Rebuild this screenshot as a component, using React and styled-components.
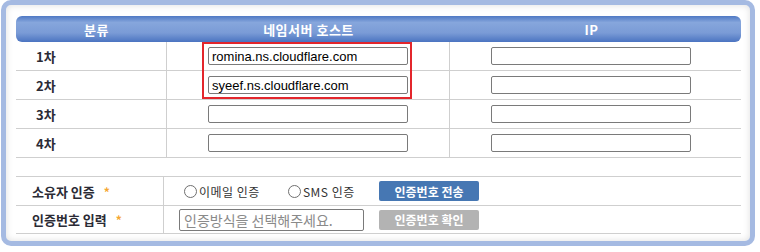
import React from "react";
import styled, { createGlobalStyle } from "styled-components";

const GlobalStyle = createGlobalStyle`
    body {
        margin: 0;
        background: #fff;
        font-family: "Noto Sans CJK KR", "Noto Sans", sans-serif;
    }
`;

const Frame = styled.div`
    box-sizing: border-box;
    margin-left: 1px;
    width: 754px;
    height: 246px;
    border: 5px solid #a5bae2;
    border-radius: 10px;
    background: #fff;
    box-shadow: inset 0 0 7px rgba(0, 0, 0, 0.13);
    padding: 11px 9px 0 10px;
`;

const Header = styled.div`
    display: grid;
    grid-template-columns: 151px 283px 1fr;
    height: 26px;
    border-radius: 6px;
    background: linear-gradient(#4f79c4, #86a6dc 25%, #7a9bd6 65%, #4b74c1);
    color: #fff;
    font-size: 13px;
    font-weight: 700;
`;

const HeadCell = styled.div`
    display: flex;
    align-items: center;
    justify-content: center;
    padding-left: ${(p) => p.$shift || 0}px;
    padding-right: ${(p) => p.$back || 0}px;
    letter-spacing: 0.5px;
`;

const Body = styled.div`
    position: relative;
`;

const Row = styled.div`
    box-sizing: border-box;
    display: grid;
    grid-template-columns: ${(p) => p.$cols};
    height: ${(p) => p.$h}px;
    border-bottom: 1px solid #cfcfcf;
`;

const Cell = styled.div`
    display: flex;
    align-items: center;
    padding-left: ${(p) => p.$pad || 0}px;
    border-right: ${(p) => (p.$line ? "1px solid #cfcfcf" : "none")};
    font-size: 13px;
    color: #333;
`;

const Label = styled.span`
    font-weight: 700;
    color: #2b2b35;
    font-size: 13px;
`;

const Star = styled.span`
    color: #f5a733;
    font-weight: 700;
    font-size: 12px;
    margin-left: 9px;
`;

const HostInput = styled.input`
    box-sizing: border-box;
    width: 200px;
    height: 18px;
    border: 1px solid #7a7a7a;
    border-radius: 2px;
    padding: 0 3px;
    font-family: "Liberation Sans", Arial, sans-serif;
    font-size: 13px;
    color: #000;
    outline: none;
`;

const CodeInput = styled.input`
    box-sizing: border-box;
    width: 185px;
    height: 22px;
    border: 1px solid #7a7a7a;
    border-radius: 2px;
    padding: 0 4px;
    font-family: "Noto Sans CJK KR", sans-serif;
    font-size: 14px;
    outline: none;

    &::placeholder {
        color: #8a8a8a;
    }
`;

const Highlight = styled.div`
    position: absolute;
    left: 186px;
    top: 0;
    width: 210px;
    height: 57px;
    box-sizing: border-box;
    border: 2px solid #e3262c;
    pointer-events: none;
`;

const RadioGroup = styled.div`
    display: flex;
    align-items: center;
    gap: 28px;
    width: 180px;
    padding-left: 5px;
`;

const Radio = styled.label`
    display: flex;
    align-items: center;
    font-size: 12px;
    letter-spacing: 0.5px;
    color: #333;
    white-space: nowrap;

    &::before {
        content: "";
        box-sizing: border-box;
        width: 13px;
        height: 13px;
        border: 1px solid #6f6f6f;
        border-radius: 50%;
        background: #fff;
        margin-right: 2px;
    }
`;

const Button = styled.button`
    width: 100px;
    height: 20px;
    border: none;
    border-radius: 2px;
    background: ${(p) => p.$bg};
    color: #fff;
    font-family: "Noto Sans CJK KR", sans-serif;
    font-size: 12px;
    font-weight: 700;
    padding: 0;
    margin-left: 15px;
`;

const hosts = ["romina.ns.cloudflare.com", "syeef.ns.cloudflare.com", "", ""];

function App() {
    return (
        <>
            <GlobalStyle />
            <Frame>
                <Header>
                    <HeadCell $shift={10}>분류</HeadCell>
                    <HeadCell>네임서버 호스트</HeadCell>
                    <HeadCell $back={8}>IP</HeadCell>
                </Header>
                <Body>
                    {hosts.map((host, i) => (
                        <Row key={i} $cols="151px 283px 1fr" $h={29}>
                            <Cell $line $pad={20}>
                                <Label>{i + 1}차</Label>
                            </Cell>
                            <Cell $line $pad={41}>
                                <HostInput defaultValue={host} />
                            </Cell>
                            <Cell $pad={41}>
                                <HostInput />
                            </Cell>
                        </Row>
                    ))}
                    <Highlight />
                </Body>
                <Row $cols="1fr" $h={19} />
                <Row $cols="148px 1fr" $h={29}>
                    <Cell $line $pad={16}>
                        <Label>소유자 인증</Label>
                        <Star>*</Star>
                    </Cell>
                    <Cell $pad={15}>
                        <RadioGroup>
                            <Radio>이메일 인증</Radio>
                            <Radio>SMS 인증</Radio>
                        </RadioGroup>
                        <Button $bg="#4677b3">인증번호 전송</Button>
                    </Cell>
                </Row>
                <Row $cols="148px 1fr" $h={28}>
                    <Cell $line $pad={16}>
                        <Label>인증번호 입력</Label>
                        <Star>*</Star>
                    </Cell>
                    <Cell $pad={15}>
                        <CodeInput placeholder="인증방식을 선택해주세요." />
                        <Button $bg="#b3b3b3">인증번호 확인</Button>
                    </Cell>
                </Row>
            </Frame>
        </>
    );
}

export default App;
